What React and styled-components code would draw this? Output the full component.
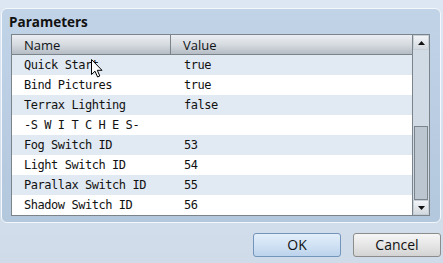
import styled, { createGlobalStyle } from "styled-components";

const GlobalStyle = createGlobalStyle`
  html, body {
    margin: 0;
    padding: 0;
  }
  body {
    width: 443px;
    height: 263px;
    overflow: hidden;
    background: linear-gradient(#dde7f3, #cfdbe8);
    font-family: "Open Sans", "Noto Sans", sans-serif;
  }
`;

const params = [
  { name: "Quick Start", value: "true" },
  { name: "Bind Pictures", value: "true" },
  { name: "Terrax Lighting", value: "false" },
  { name: "-S W I T C H E S-", value: "" },
  { name: "Fog Switch ID", value: "53" },
  { name: "Light Switch ID", value: "54" },
  { name: "Parallax Switch ID", value: "55" },
  { name: "Shadow Switch ID", value: "56" },
];

const App = () => {
  return (
    <>
      <GlobalStyle />
      <Dialog>
        <GroupBox>
          <GroupTitle>Parameters</GroupTitle>
          <ListBox>
            <Table>
              <HeaderRow>
                <HeaderCell $width={159} $divider>Name</HeaderCell>
                <HeaderCell>Value</HeaderCell>
              </HeaderRow>
              {params.map((p, i) => (
                <Row key={p.name} $alt={i % 2 === 0}>
                  <Cell $width={160}>{p.name}</Cell>
                  <Cell>{p.value}</Cell>
                </Row>
              ))}
              <Cursor viewBox="0 0 12 19" width="12" height="19">
                <path
                  d="M0.5 0.5 L0.5 15.5 L4 12.2 L6.6 18 L8.8 17 L6.3 11.3 L11 11.3 Z"
                  fill="#fff"
                  stroke="#000"
                  strokeWidth="1"
                  strokeLinejoin="round"
                />
              </Cursor>
            </Table>
            <ScrollBar>
              <ArrowButton>
                <svg width="7" height="4" viewBox="0 0 7 4">
                  <path d="M3.5 0 L7 4 L0 4 Z" fill="#111" />
                </svg>
              </ArrowButton>
              <Track>
                <Thumb $size={74} />
              </Track>
              <ArrowButton>
                <svg width="7" height="4" viewBox="0 0 7 4">
                  <path d="M0 0 L7 0 L3.5 4 Z" fill="#111" />
                </svg>
              </ArrowButton>
            </ScrollBar>
          </ListBox>
        </GroupBox>
        <Footer>
          <Button $primary>OK</Button>
          <Button>Cancel</Button>
        </Footer>
      </Dialog>
    </>
  );
};

export default App;

const Dialog = styled.div`
  display: flex;
  flex-direction: column;
  padding: 8px 2px 0 1px;
`;

const GroupBox = styled.div`
  display: flex;
  flex-direction: column;
  height: 215px;
  box-sizing: border-box;
  padding: 0 10px 7px 9px;
  border: 1px solid #f4f8fc;
  border-radius: 6px;
  background: linear-gradient(#c1d3e7, #b3c7dd);
`;

const GroupTitle = styled.div`
  height: 25px;
  line-height: 26px;
  margin-left: -2px;
  font-size: 13.5px;
  font-weight: 700;
  color: #111;
`;

const ListBox = styled.div`
  display: flex;
  flex: 1;
  border: 1px solid #7b838b;
  background: #fff;
`;

const Table = styled.div`
  position: relative;
  flex: 1;
  display: flex;
  flex-direction: column;
  overflow: hidden;
`;

const HeaderRow = styled.div`
  display: flex;
  height: 19px;
  border-bottom: 1px solid #7b838b;
  background: linear-gradient(#ebeef2, #d6dbe0 50%, #b5bcc4);
`;

const HeaderCell = styled.div`
  width: ${(p) => (p.$width ? `${p.$width}px` : "auto")};
  flex: ${(p) => (p.$width ? "none" : 1)};
  padding-left: 12px;
  box-sizing: border-box;
  border-right: ${(p) => (p.$divider ? "1px solid #7b838b" : "none")};
  font-size: 13px;
  line-height: 20px;
  color: #101418;
`;

const Row = styled.div`
  display: flex;
  height: 20px;
  flex: none;
  background: ${(p) => (p.$alt ? "#e1e9f2" : "#ffffff")};
`;

const Cell = styled.div`
  width: ${(p) => (p.$width ? `${p.$width}px` : "auto")};
  flex: ${(p) => (p.$width ? "none" : 1)};
  padding-left: 12px;
  box-sizing: border-box;
  font-family: "DejaVu Sans Mono", monospace;
  font-size: 12px;
  letter-spacing: -0.45px;
  line-height: 21px;
  color: #111;
  white-space: pre;
`;

const Cursor = styled.svg`
  position: absolute;
  left: 79px;
  top: 24px;
`;

const ScrollBar = styled.div`
  width: 16px;
  display: flex;
  flex-direction: column;
  border-left: 1px solid #7b838b;
  background: #d0dbe6;
`;

const ArrowButton = styled.div`
  height: 15px;
  flex: none;
  display: flex;
  align-items: center;
  justify-content: center;
  box-sizing: border-box;
  border: 1px solid #c6ced6;
  background: linear-gradient(#f2f4f7, #d3d9df);
`;

const Track = styled.div`
  flex: 1;
  display: flex;
  flex-direction: column;
  justify-content: flex-end;
  padding: 0 1px;
`;

const Thumb = styled.div`
  height: ${(p) => p.$size}px;
  box-sizing: border-box;
  border: 1px solid #7b838b;
  background: #bcc6d0;
`;

const Footer = styled.div`
  display: flex;
  justify-content: flex-end;
  gap: 12px;
  padding-top: 10px;
`;

const Button = styled.button`
  width: 88px;
  height: 24px;
  box-sizing: border-box;
  border-radius: 3px;
  border: 1px solid ${(p) => (p.$primary ? "#7394bb" : "#8c8c8c")};
  background: ${(p) =>
    p.$primary
      ? "linear-gradient(#e3eefa, #d1e2f4 50%, #bcd3ec)"
      : "linear-gradient(#f6f6f6, #e6e6e6 50%, #d3d3d3)"};
  font-family: "Open Sans", "Noto Sans", sans-serif;
  font-size: 14px;
  color: #111;
  padding: 0;
  line-height: 22px;
`;
